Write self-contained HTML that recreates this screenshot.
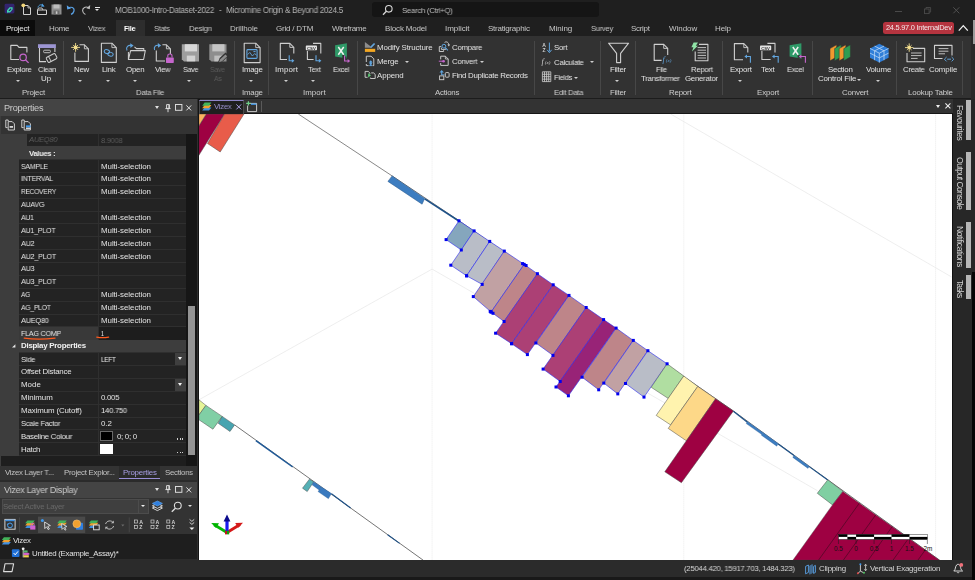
<!DOCTYPE html>
<html><head><meta charset="utf-8"><title>Micromine</title>
<style>
*{box-sizing:border-box;margin:0;padding:0}
html,body{width:975px;height:580px;overflow:hidden}
body{background:#2b2b2b;font-family:"Liberation Sans",sans-serif;font-size:8px;color:#dcdcdc;position:relative}
.a{position:absolute}
.t{position:absolute;white-space:nowrap;line-height:12px;height:12px;will-change:transform}
svg{overflow:visible}
</style></head><body>
<div class="a" style="left:0px;top:0px;width:975px;height:20px;background:#1f1f1f;"></div>
<div class="a" style="left:0px;top:20px;width:975px;height:16px;background:#1f1f1f;"></div>
<svg class="a" style="left:3.6px;top:2.7px" width="12" height="13" viewBox="0 0 12 13"><rect x="0.6" y="0.8" width="9.8" height="9.6" rx="1.4" fill="#33246e"/><path d="M3 7.2 L5.6 4.2 H8.6 V6.6 L6 9.4 H3.6 L3 10.4 Z" fill="#3fd9b0"/><path d="M4.6 7.4 L6.3 5.6 H7.3 V6.4 L5.7 8.1 H4.6Z" fill="#33246e"/></svg>
<svg class="a" style="left:21px;top:2.2px" width="12" height="14" viewBox="0 0 12 14"><path d="M2.5 3.5 H7 L9.5 6 V12.5 H2.5Z" fill="none" stroke="#d0d0d0" stroke-width="1"/><path d="M7 3.5V6H9.5" fill="none" stroke="#d0d0d0" stroke-width="0.8"/><circle cx="2.3" cy="3.3" r="1.9" fill="#f3d77a"/></svg>
<svg class="a" style="left:36px;top:2.2px" width="13" height="14" viewBox="0 0 13 14"><path d="M1.5 8 H10.5 V12.5 H1.5Z" fill="none" stroke="#d0d0d0" stroke-width="1"/><path d="M1.5 8 L2.5 6 H6 L7 8" fill="none" stroke="#d0d0d0" stroke-width="0.9"/><path d="M2 5.5 C2.5 2.5 6 2 7.5 4" fill="none" stroke="#4f9fe0" stroke-width="1"/><path d="M6.2 1.5 L8.6 4.6 L5.2 4.8Z" fill="#4f9fe0"/></svg>
<svg class="a" style="left:51px;top:4px" width="12" height="11" viewBox="0 0 12 11"><rect x="0.5" y="0.5" width="10" height="10" fill="#8f8f8f"/><rect x="2.5" y="0.5" width="6" height="4" fill="#bdbdbd"/><rect x="2.5" y="6.5" width="6" height="4" fill="#6a6a6a"/><rect x="4.8" y="7.3" width="1.6" height="2.6" fill="#c9c9c9"/></svg>
<svg class="a" style="left:66px;top:4px" width="11" height="11" viewBox="0 0 11 11"><path d="M2 4.2 C5 2.2 8.6 3.6 8 7 C7.6 8.6 6.4 9.8 5 10.4" fill="none" stroke="#5aa3e8" stroke-width="1.2"/><path d="M0.8 1.2 L1.2 5.6 L5 4.4Z" fill="#5aa3e8"/></svg>
<svg class="a" style="left:80px;top:4px" width="12" height="11" viewBox="0 0 12 11"><path d="M8.5 3.8 C5.8 2 2.4 3.6 2.6 6.8 C2.8 8.6 4 9.8 5.4 10.4" fill="none" stroke="#bdbdbd" stroke-width="1.1"/><path d="M10.2 1 L9.8 5.2 L6.4 4.2Z" fill="#bdbdbd"/></svg>
<div class="a" style="left:94.5px;top:6.6px;width:5.6px;height:1px;background:#e6e6e6;"></div>
<div class="a" style="left:94.50px;top:8.80px;width:0;height:0;border-left:2.8px solid transparent;border-right:2.8px solid transparent;border-top:2.8px solid #e6e6e6"></div>
<div class="t" style="left:114.70px;top:4.00px;font-size:8.3px;color:#b4b4b4;letter-spacing:-0.300px;transform:scaleX(0.9750);transform-origin:0 50%;">MOB1000-Intro-Dataset-2022</div>
<div class="t" style="left:218.60px;top:4.00px;font-size:8.3px;color:#b4b4b4;letter-spacing:-0.300px;transform:scaleX(0.9739);transform-origin:0 50%;">-</div>
<div class="t" style="left:225.90px;top:4.00px;font-size:8.3px;color:#b4b4b4;letter-spacing:-0.300px;transform:scaleX(0.9823);transform-origin:0 50%;">Micromine Origin &amp; Beyond 2024.5</div>
<div class="a" style="left:372px;top:2px;width:227.2px;height:15.4px;background:#151515;border-radius:3px;"></div>
<svg class="a" style="left:382px;top:4px" width="12" height="12" viewBox="0 0 12 12"><circle cx="6.8" cy="4.8" r="3.3" fill="none" stroke="#d8d8d8" stroke-width="1.1"/><path d="M4.4 7.3 L1 10.8" stroke="#d8d8d8" stroke-width="1.3"/></svg>
<div class="t" style="left:401.90px;top:5.00px;font-size:8.1px;color:#bdbdbd;letter-spacing:-0.300px;transform:scaleX(0.9651);transform-origin:0 50%;">Search (Ctrl+Q)</div>
<div class="a" style="left:895px;top:10.6px;width:6.6px;height:1px;background:#4a4a4a;"></div>
<svg class="a" style="left:924px;top:7px" width="8" height="8" viewBox="0 0 8 8"><rect x="0.5" y="2" width="4.6" height="4.6" fill="none" stroke="#4a4a4a" stroke-width="0.9"/><path d="M2 2V0.5H6.6V5.1H5.1" fill="none" stroke="#4a4a4a" stroke-width="0.9"/></svg>
<svg class="a" style="left:953px;top:6.5px" width="7" height="7" viewBox="0 0 7 7"><path d="M0.3 0.3L6.3 6.3M6.3 0.3L0.3 6.3" stroke="#505050" stroke-width="1"/></svg>
<div class="a" style="left:0px;top:20px;width:35px;height:16px;background:#0b0b0b;"></div>
<div class="a" style="left:115.5px;top:20px;width:29px;height:16px;background:#2d2d2d;"></div>
<div class="t" style="left:6.00px;top:23.00px;font-size:8.0px;color:#e8e8e8;letter-spacing:-0.233px;">Project</div>
<div class="t" style="left:49.00px;top:23.00px;font-size:8.0px;color:#c6c6c6;letter-spacing:-0.280px;">Home</div>
<div class="t" style="left:88.00px;top:23.00px;font-size:8.0px;color:#c6c6c6;letter-spacing:-0.300px;transform:scaleX(0.9605);transform-origin:0 50%;">Vizex</div>
<div class="t" style="left:153.90px;top:23.00px;font-size:8.0px;color:#c6c6c6;letter-spacing:-0.300px;transform:scaleX(0.9395);transform-origin:0 50%;">Stats</div>
<div class="t" style="left:188.50px;top:23.00px;font-size:8.0px;color:#c6c6c6;letter-spacing:-0.300px;transform:scaleX(0.9828);transform-origin:0 50%;">Design</div>
<div class="t" style="left:229.90px;top:23.00px;font-size:8.0px;color:#c6c6c6;letter-spacing:-0.113px;">Drillhole</div>
<div class="t" style="left:276.00px;top:23.00px;font-size:8.0px;color:#c6c6c6;letter-spacing:-0.201px;">Grid / DTM</div>
<div class="t" style="left:332.00px;top:23.00px;font-size:8.0px;color:#c6c6c6;letter-spacing:-0.274px;">Wireframe</div>
<div class="t" style="left:385.30px;top:23.00px;font-size:8.0px;color:#c6c6c6;letter-spacing:-0.168px;">Block Model</div>
<div class="t" style="left:445.30px;top:23.00px;font-size:8.0px;color:#c6c6c6;letter-spacing:-0.042px;">Implicit</div>
<div class="t" style="left:488.00px;top:23.00px;font-size:8.0px;color:#c6c6c6;letter-spacing:-0.251px;">Stratigraphic</div>
<div class="t" style="left:548.80px;top:23.00px;font-size:8.0px;color:#c6c6c6;letter-spacing:-0.073px;">Mining</div>
<div class="t" style="left:590.70px;top:23.00px;font-size:8.0px;color:#c6c6c6;letter-spacing:-0.300px;transform:scaleX(0.9445);transform-origin:0 50%;">Survey</div>
<div class="t" style="left:631.20px;top:23.00px;font-size:8.0px;color:#c6c6c6;letter-spacing:-0.300px;transform:scaleX(0.9974);transform-origin:0 50%;">Script</div>
<div class="t" style="left:668.50px;top:23.00px;font-size:8.0px;color:#c6c6c6;letter-spacing:-0.031px;">Window</div>
<div class="t" style="left:714.70px;top:23.00px;font-size:8.0px;color:#c6c6c6;letter-spacing:-0.151px;">Help</div>
<div class="t" style="left:124.00px;top:23.00px;font-size:8.0px;color:#ffffff;letter-spacing:-0.300px;transform:scaleX(0.8928);transform-origin:0 50%;font-weight:bold;">File</div>
<div class="a" style="left:883px;top:22px;width:70.6px;height:11.8px;background:#b5343f;border-radius:2.5px;"></div>
<div class="t" style="left:885.60px;top:22.00px;font-size:7.4px;color:#f4e9ea;letter-spacing:-0.238px;">24.5.97.0 InternalDev</div>
<svg class="a" style="left:958px;top:24px" width="11" height="8" viewBox="0 0 11 8"><path d="M0.8 6.6 L5.3 1.6 L9.8 6.6" fill="none" stroke="#f0f0f0" stroke-width="1.3"/></svg>
<div class="a" style="left:0px;top:36px;width:975px;height:63px;background:#323232;"></div>
<div class="a" style="left:63.1px;top:41px;width:1px;height:53.5px;background:#474747;"></div>
<div class="a" style="left:233.9px;top:41px;width:1px;height:53.5px;background:#474747;"></div>
<div class="a" style="left:268.1px;top:41px;width:1px;height:53.5px;background:#474747;"></div>
<div class="a" style="left:356.9px;top:41px;width:1px;height:53.5px;background:#474747;"></div>
<div class="a" style="left:533.9px;top:41px;width:1px;height:53.5px;background:#474747;"></div>
<div class="a" style="left:599.9px;top:41px;width:1px;height:53.5px;background:#474747;"></div>
<div class="a" style="left:634.9px;top:41px;width:1px;height:53.5px;background:#474747;"></div>
<div class="a" style="left:722.1px;top:41px;width:1px;height:53.5px;background:#474747;"></div>
<div class="a" style="left:811.5px;top:41px;width:1px;height:53.5px;background:#474747;"></div>
<div class="a" style="left:896.3px;top:41px;width:1px;height:53.5px;background:#474747;"></div>
<div class="a" style="left:962.2px;top:41px;width:1px;height:53.5px;background:#474747;"></div>
<div class="t" style="left:6.60px;top:64.00px;font-size:7.9px;color:#e2e2e2;letter-spacing:-0.300px;transform:scaleX(0.9925);transform-origin:0 50%;">Explore</div>
<div class="t" style="left:37.60px;top:64.00px;font-size:7.9px;color:#e2e2e2;letter-spacing:-0.300px;transform:scaleX(0.9464);transform-origin:0 50%;">Clean</div>
<div class="t" style="left:41.40px;top:73.00px;font-size:7.9px;color:#e2e2e2;letter-spacing:0.101px;">Up</div>
<div class="t" style="left:73.60px;top:64.00px;font-size:7.9px;color:#e2e2e2;letter-spacing:-0.300px;transform:scaleX(0.9997);transform-origin:0 50%;">New</div>
<div class="t" style="left:101.60px;top:64.00px;font-size:7.9px;color:#e2e2e2;letter-spacing:-0.300px;transform:scaleX(0.9858);transform-origin:0 50%;">Link</div>
<div class="t" style="left:126.40px;top:64.00px;font-size:7.9px;color:#e2e2e2;letter-spacing:-0.242px;">Open</div>
<div class="t" style="left:155.40px;top:64.00px;font-size:7.9px;color:#e2e2e2;letter-spacing:-0.300px;transform:scaleX(0.9701);transform-origin:0 50%;">View</div>
<div class="t" style="left:182.60px;top:64.00px;font-size:7.9px;color:#e2e2e2;letter-spacing:-0.300px;transform:scaleX(0.9002);transform-origin:0 50%;">Save</div>
<div class="t" style="left:241.60px;top:64.00px;font-size:7.9px;color:#e2e2e2;letter-spacing:-0.289px;">Image</div>
<div class="t" style="left:275.00px;top:64.00px;font-size:7.9px;color:#e2e2e2;letter-spacing:0.122px;">Import</div>
<div class="t" style="left:307.60px;top:64.00px;font-size:7.9px;color:#e2e2e2;letter-spacing:-0.300px;transform:scaleX(0.9420);transform-origin:0 50%;">Text</div>
<div class="t" style="left:333.00px;top:64.00px;font-size:7.9px;color:#e2e2e2;letter-spacing:-0.300px;transform:scaleX(0.9051);transform-origin:0 50%;">Excel</div>
<div class="t" style="left:610.40px;top:64.00px;font-size:7.9px;color:#e2e2e2;letter-spacing:-0.271px;">Filter</div>
<div class="t" style="left:656.00px;top:64.00px;font-size:7.9px;color:#e2e2e2;letter-spacing:-0.300px;transform:scaleX(0.9298);transform-origin:0 50%;">File</div>
<div class="t" style="left:641.00px;top:73.00px;font-size:7.9px;color:#e2e2e2;letter-spacing:-0.300px;transform:scaleX(0.9817);transform-origin:0 50%;">Transformer</div>
<div class="t" style="left:690.60px;top:64.00px;font-size:7.9px;color:#e2e2e2;letter-spacing:-0.300px;transform:scaleX(0.9814);transform-origin:0 50%;">Report</div>
<div class="t" style="left:685.00px;top:73.00px;font-size:7.9px;color:#e2e2e2;letter-spacing:-0.300px;transform:scaleX(0.9949);transform-origin:0 50%;">Generator</div>
<div class="t" style="left:730.00px;top:64.00px;font-size:7.9px;color:#e2e2e2;letter-spacing:-0.167px;">Export</div>
<div class="t" style="left:761.30px;top:64.00px;font-size:7.9px;color:#e2e2e2;letter-spacing:-0.263px;">Text</div>
<div class="t" style="left:787.20px;top:64.00px;font-size:7.9px;color:#e2e2e2;letter-spacing:-0.300px;transform:scaleX(0.9383);transform-origin:0 50%;">Excel</div>
<div class="t" style="left:827.70px;top:64.00px;font-size:7.9px;color:#e2e2e2;letter-spacing:-0.242px;">Section</div>
<div class="t" style="left:818.00px;top:73.00px;font-size:7.9px;color:#e2e2e2;letter-spacing:-0.172px;">Control File</div>
<div class="t" style="left:866.00px;top:64.00px;font-size:7.9px;color:#e2e2e2;letter-spacing:-0.210px;">Volume</div>
<div class="t" style="left:903.00px;top:64.00px;font-size:7.9px;color:#e2e2e2;letter-spacing:-0.300px;transform:scaleX(0.9814);transform-origin:0 50%;">Create</div>
<div class="t" style="left:929.20px;top:64.00px;font-size:7.9px;color:#e2e2e2;letter-spacing:-0.113px;">Compile</div>
<div class="t" style="left:210.00px;top:64.00px;font-size:7.9px;color:#5a5a5a;letter-spacing:-0.300px;transform:scaleX(0.8768);transform-origin:0 50%;">Save</div>
<div class="t" style="left:214.00px;top:73.00px;font-size:7.9px;color:#5a5a5a;letter-spacing:-0.300px;transform:scaleX(0.8521);transform-origin:0 50%;">As</div>
<div class="a" style="left:16.20px;top:79.95px;width:0;height:0;border-left:2.0px solid transparent;border-right:2.0px solid transparent;border-top:2.1px solid #cfcfcf"></div>
<div class="a" style="left:78.40px;top:79.95px;width:0;height:0;border-left:2.0px solid transparent;border-right:2.0px solid transparent;border-top:2.1px solid #cfcfcf"></div>
<div class="a" style="left:105.60px;top:79.95px;width:0;height:0;border-left:2.0px solid transparent;border-right:2.0px solid transparent;border-top:2.1px solid #cfcfcf"></div>
<div class="a" style="left:132.80px;top:79.95px;width:0;height:0;border-left:2.0px solid transparent;border-right:2.0px solid transparent;border-top:2.1px solid #cfcfcf"></div>
<div class="a" style="left:187.40px;top:79.95px;width:0;height:0;border-left:2.0px solid transparent;border-right:2.0px solid transparent;border-top:2.1px solid #cfcfcf"></div>
<div class="a" style="left:249.00px;top:79.95px;width:0;height:0;border-left:2.0px solid transparent;border-right:2.0px solid transparent;border-top:2.1px solid #cfcfcf"></div>
<div class="a" style="left:283.60px;top:79.95px;width:0;height:0;border-left:2.0px solid transparent;border-right:2.0px solid transparent;border-top:2.1px solid #cfcfcf"></div>
<div class="a" style="left:311.00px;top:79.95px;width:0;height:0;border-left:2.0px solid transparent;border-right:2.0px solid transparent;border-top:2.1px solid #cfcfcf"></div>
<div class="a" style="left:615.40px;top:79.95px;width:0;height:0;border-left:2.0px solid transparent;border-right:2.0px solid transparent;border-top:2.1px solid #cfcfcf"></div>
<div class="a" style="left:737.60px;top:79.95px;width:0;height:0;border-left:2.0px solid transparent;border-right:2.0px solid transparent;border-top:2.1px solid #cfcfcf"></div>
<div class="a" style="left:876.20px;top:79.95px;width:0;height:0;border-left:2.0px solid transparent;border-right:2.0px solid transparent;border-top:2.1px solid #cfcfcf"></div>
<div class="a" style="left:857.00px;top:78.55px;width:0;height:0;border-left:2.0px solid transparent;border-right:2.0px solid transparent;border-top:2.1px solid #cfcfcf"></div>
<div class="t" style="left:21.60px;top:87.00px;font-size:7.9px;color:#cdcdcd;letter-spacing:-0.231px;">Project</div>
<div class="t" style="left:135.60px;top:87.00px;font-size:7.9px;color:#cdcdcd;letter-spacing:-0.300px;transform:scaleX(0.9722);transform-origin:0 50%;">Data File</div>
<div class="t" style="left:242.00px;top:87.00px;font-size:7.9px;color:#cdcdcd;letter-spacing:-0.239px;">Image</div>
<div class="t" style="left:303.00px;top:87.00px;font-size:7.9px;color:#cdcdcd;letter-spacing:0.042px;">Import</div>
<div class="t" style="left:435.00px;top:87.00px;font-size:7.9px;color:#cdcdcd;letter-spacing:-0.251px;">Actions</div>
<div class="t" style="left:553.60px;top:87.00px;font-size:7.9px;color:#cdcdcd;letter-spacing:-0.300px;transform:scaleX(0.9769);transform-origin:0 50%;">Edit Data</div>
<div class="t" style="left:610.40px;top:87.00px;font-size:7.9px;color:#cdcdcd;letter-spacing:-0.271px;">Filter</div>
<div class="t" style="left:669.00px;top:87.00px;font-size:7.9px;color:#cdcdcd;letter-spacing:-0.222px;">Report</div>
<div class="t" style="left:757.40px;top:87.00px;font-size:7.9px;color:#cdcdcd;letter-spacing:-0.127px;">Export</div>
<div class="t" style="left:842.00px;top:87.00px;font-size:7.9px;color:#cdcdcd;letter-spacing:-0.194px;">Convert</div>
<div class="t" style="left:907.80px;top:87.00px;font-size:7.9px;color:#cdcdcd;letter-spacing:-0.178px;">Lookup Table</div>
<div class="t" style="left:377.40px;top:42.00px;font-size:7.9px;color:#e2e2e2;letter-spacing:-0.128px;">Modify Structure</div>
<div class="t" style="left:377.40px;top:56.00px;font-size:7.9px;color:#e2e2e2;letter-spacing:-0.198px;">Merge</div>
<div class="t" style="left:377.40px;top:70.00px;font-size:7.9px;color:#e2e2e2;letter-spacing:-0.128px;">Append</div>
<div class="t" style="left:452.00px;top:42.00px;font-size:7.9px;color:#e2e2e2;letter-spacing:-0.300px;transform:scaleX(0.9905);transform-origin:0 50%;">Compare</div>
<div class="t" style="left:452.00px;top:56.00px;font-size:7.9px;color:#e2e2e2;letter-spacing:-0.300px;transform:scaleX(0.9821);transform-origin:0 50%;">Convert</div>
<div class="t" style="left:452.00px;top:70.00px;font-size:7.9px;color:#e2e2e2;letter-spacing:-0.291px;">Find Duplicate Records</div>
<div class="t" style="left:554.00px;top:42.00px;font-size:7.9px;color:#e2e2e2;letter-spacing:-0.300px;transform:scaleX(0.9861);transform-origin:0 50%;">Sort</div>
<div class="t" style="left:554.00px;top:57.00px;font-size:7.9px;color:#e2e2e2;letter-spacing:-0.300px;transform:scaleX(0.9825);transform-origin:0 50%;">Calculate</div>
<div class="t" style="left:554.00px;top:72.00px;font-size:7.9px;color:#e2e2e2;letter-spacing:-0.300px;transform:scaleX(0.9400);transform-origin:0 50%;">Fields</div>
<div class="a" style="left:405.40px;top:60.75px;width:0;height:0;border-left:2.0px solid transparent;border-right:2.0px solid transparent;border-top:2.1px solid #cfcfcf"></div>
<div class="a" style="left:479.60px;top:61.15px;width:0;height:0;border-left:2.0px solid transparent;border-right:2.0px solid transparent;border-top:2.1px solid #cfcfcf"></div>
<div class="a" style="left:590.40px;top:60.95px;width:0;height:0;border-left:2.0px solid transparent;border-right:2.0px solid transparent;border-top:2.1px solid #cfcfcf"></div>
<div class="a" style="left:574.40px;top:76.55px;width:0;height:0;border-left:2.0px solid transparent;border-right:2.0px solid transparent;border-top:2.1px solid #cfcfcf"></div>
<svg class="a" style="left:0;top:0" width="975" height="100" viewBox="0 0 975 100"><path d="M26.9 52.5V47.4H19L17.2 45.4H10.8V59.5H19" fill="none" stroke="#cfcfcf" stroke-width="1.1" stroke-linejoin="round"/><circle cx="23.1" cy="57.4" r="3.2" fill="none" stroke="#c566cc" stroke-width="1.2"/><path d="M25.4 59.8L28.6 62.9" stroke="#c566cc" stroke-width="1.3"/><rect x="38" y="44.2" width="17.9" height="3.8" fill="#9c95d2"/><path d="M54.9 48V52M39.5 48V61.6H46" fill="none" stroke="#cfcfcf" stroke-width="1.1"/><rect x="43.6" y="50.2" width="6.8" height="2.5" rx="1" fill="none" stroke="#cfcfcf" stroke-width="0.9"/><g transform="translate(51.6 58) rotate(-28)"><rect x="-5" y="-2.8" width="10" height="5.6" rx="1.2" fill="#323232" stroke="#cfcfcf" stroke-width="1"/><path d="M-2 -2.8V2.8" stroke="#cfcfcf" stroke-width="0.9"/></g><path d="M79.5 44.8H84.4L88.4 48.8V61.4H74.9V52.5" fill="none" stroke="#cfcfcf" stroke-width="1.1" stroke-linejoin="round"/><path d="M84.4 44.8V48.8H88.4" fill="none" stroke="#cfcfcf" stroke-width="0.9"/><path d="M71.20 47.40L80.00 47.40M73.11 44.91L78.09 49.89M75.60 43.00L75.60 51.80M78.09 44.91L73.11 49.89" stroke="#f4df8e" stroke-width="0.9"/><circle cx="75.6" cy="47.4" r="1.85" fill="#f4df8e"/><path d="M101.4 43.2H111.89999999999999L116.3 47.6V62.4H101.4Z" fill="none" stroke="#cfcfcf" stroke-width="1.1" stroke-linejoin="round"/><path d="M111.89999999999999 43.2V47.6H116.3" fill="none" stroke="#cfcfcf" stroke-width="0.8800000000000001"/><ellipse cx="106.9" cy="51.6" rx="2.7" ry="1.9" fill="none" stroke="#62a5de" stroke-width="1" transform="rotate(15 106.9 51.6)"/><ellipse cx="110.5" cy="54.2" rx="2.7" ry="1.9" fill="none" stroke="#62a5de" stroke-width="1" transform="rotate(15 110.5 54.2)"/><path d="M134.5 46.8L136.4 48.6H143.8V50.4M128.4 52V59.5H143.6L145.3 50.6H130.6L128.4 59.5" fill="none" stroke="#cfcfcf" stroke-width="1.05" stroke-linejoin="round"/><path d="M127 50.4C125.4 47 128.4 44.6 131.4 45.6" fill="none" stroke="#62a5de" stroke-width="1.1"/><path d="M130.2 43.2L133.6 45.6L130.4 48Z" fill="#62a5de"/><path d="M162.4 44.8H166.4L170.4 48.8V54M156.3 50.6V61H165" fill="none" stroke="#cfcfcf" stroke-width="1.1" stroke-linejoin="round"/><path d="M166.4 44.8V48.8H170.4" fill="none" stroke="#cfcfcf" stroke-width="0.9"/><path d="M154.6 50C153.4 46.8 156 44.6 158.8 45.4" fill="none" stroke="#62a5de" stroke-width="1.1"/><path d="M157.8 43L161.2 45.4L158 47.8Z" fill="#62a5de"/><rect x="166" y="57.4" width="7.8" height="5.5" rx="0.6" fill="#c566cc"/><path d="M167.8 57.4V55.8C167.8 53.4 172 53.4 172 55.8V57.4" fill="none" stroke="#c566cc" stroke-width="1.1"/><path d="M181.8 44.2H199.0V61.4H184.0L181.8 59.2Z" fill="#9e9e9e"/><rect x="184.8" y="44.2" width="12.2" height="7.2" fill="#d8d8d8"/><rect x="186.8" y="55.6" width="8.4" height="5.8" fill="#d2d2d2"/><path d="M209.3 44.2H226.5V61.4H211.5L209.3 59.2Z" fill="#8e8e8e"/><rect x="212.3" y="44.2" width="12.2" height="7.2" fill="#c4c4c4"/><rect x="214.3" y="55.6" width="8.4" height="5.8" fill="#bebebe"/><path d="M217.6 63.4L219.6 58L225.6 52.6L228.6 55.6L222.8 61.4Z" fill="#323232"/><path d="M219 62.2L220.2 59.2L225.4 54.4L227.2 56.2L222 61.2Z" fill="#8c8c8c"/><path d="M244.2 43.2H255.70000000000002L260.1 47.6V62.6H244.2Z" fill="none" stroke="#cfcfcf" stroke-width="1.1" stroke-linejoin="round"/><path d="M255.70000000000002 43.2V47.6H260.1" fill="none" stroke="#cfcfcf" stroke-width="0.8800000000000001"/><rect x="246.9" y="49.6" width="10.2" height="8.8" rx="0.8" fill="none" stroke="#62a5de" stroke-width="1.1"/><path d="M247.6 54.6L249.8 52.4L252.4 56L254.6 53.6L256.6 55.2" fill="none" stroke="#62a5de" stroke-width="0.9"/><path d="M253.4 51.6H255.6" stroke="#62a5de" stroke-width="1"/><path d="M293.8 53.4V47.4L289.8 43.4H280.3V59.5H287" fill="none" stroke="#cfcfcf" stroke-width="1.1" stroke-linejoin="round"/><path d="M289.8 43.4V47.4H293.8" fill="none" stroke="#cfcfcf" stroke-width="0.9"/><path d="M289.2 55.2V60.8H292.9" fill="none" stroke="#62a5de" stroke-width="1.1"/><path d="M291.79999999999995 58.8L294.4 60.8L291.79999999999995 62.8Z" fill="#62a5de"/><path d="M313 43.4H320.8V53.4M307.4 51V59.5H313.6" fill="none" stroke="#cfcfcf" stroke-width="1.1" stroke-linejoin="round"/><rect x="305.8" y="45.6" width="11.2" height="4.6" rx="0.8" fill="#e4e4e4"/><text x="311.40000000000003" y="49.5" font-size="4.2" font-weight="bold" text-anchor="middle" fill="#323232" font-family="Liberation Sans">CSV</text><path d="M316 55.2V60.8H319.9" fill="none" stroke="#62a5de" stroke-width="1.1"/><path d="M318.79999999999995 58.8L321.4 60.8L318.79999999999995 62.8Z" fill="#62a5de"/><path d="M335.1 45.2L346.90000000000003 43.2V58.4L335.1 56.6Z" fill="#2f9a68"/><path d="M338.3 47L343.70000000000005 54.8M343.70000000000005 47L338.3 54.8" stroke="#f2f2f2" stroke-width="1.5"/><path d="M343.4 55V61.8H345.4V56.4" fill="none" stroke="#323232" stroke-width="2.2"/><path d="M344.6 55.4V61H348.7" fill="none" stroke="#c566cc" stroke-width="1.1"/><path d="M347.59999999999997 59L350.2 61L347.59999999999997 63Z" fill="#c566cc"/><path d="M364.9 42.1V47.8H372.4Z" fill="#8d8d8d"/><rect x="364.9" y="48.8" width="10.3" height="3.1" fill="#f3a722"/><path d="M370.2 47.9L370.9 45.9L374 42.9L375.2 44.1L372.1 47.2Z" fill="#62a5de"/><path d="M366.3 62V56.2H371L373.8 58.8V65.6H372.6M366.3 64V65.6H368.6" fill="none" stroke="#cfcfcf" stroke-width="0.95"/><path d="M370.7 65.8V61.6" stroke="#62a5de" stroke-width="1.2"/><path d="M368.7 62.6L370.7 60.2L372.7 62.6Z" fill="#62a5de"/><circle cx="370.7" cy="63.4" r="1.2" fill="#62a5de"/><path d="M369.2 65.6H372.2" stroke="#62a5de" stroke-width="0.9"/><path d="M367.6 77.3H365.1V71.4H368.2L369.9 73V73.8" fill="none" stroke="#cfcfcf" stroke-width="0.95"/><path d="M371.2 72.9H373.6L375.2 74.4V78.5H370.4V77.6" fill="none" stroke="#cfcfcf" stroke-width="0.95"/><path d="M368.2 73.2L371 75.3L368.2 77.4Z" fill="#5fd07a"/><path d="M441.2 46.6H439.3V51.5H443.6V50.2" fill="none" stroke="#cfcfcf" stroke-width="0.95"/><path d="M445.8 48.4V49.4H441.4V47.6" fill="none" stroke="#cfcfcf" stroke-width="0.9"/><path d="M444.6 42.4C446.6 41 449 42.6 448.8 45.2" fill="none" stroke="#cfcfcf" stroke-width="0.95"/><path d="M447.4 44.6L448.9 46.4L450 44.4Z" fill="#cfcfcf"/><circle cx="443.9" cy="46.2" r="1.9" fill="none" stroke="#62a5de" stroke-width="1"/><path d="M445.3 47.7L447.9 50.4" stroke="#62a5de" stroke-width="1.05"/><path d="M440.7 59.4V56.2H445.4L448.2 59V65.4H440.7V63" fill="none" stroke="#cfcfcf" stroke-width="0.95"/><path d="M445.4 56.2V59H448.2" fill="none" stroke="#cfcfcf" stroke-width="0.8"/><path d="M438.8 61.2H443" stroke="#c566cc" stroke-width="1"/><circle cx="443.6" cy="61.2" r="1.3" fill="#c566cc"/><path d="M441.7 75.2V71.4" stroke="#62a5de" stroke-width="1.1"/><path d="M439.5 72.4L441.7 69.9L443.9 72.4Z" fill="#62a5de"/><path d="M441.7 74.8H444.6" stroke="#62a5de" stroke-width="0.9"/><rect x="439.6" y="75.9" width="4.2" height="3.8" fill="none" stroke="#cfcfcf" stroke-width="0.9"/><rect x="445.3" y="72.6" width="3.8" height="4.6" rx="0.9" fill="none" stroke="#cfcfcf" stroke-width="0.95"/><text x="544" y="46.8" font-size="5" font-weight="bold" text-anchor="middle" fill="#cfcfcf" font-family="Liberation Sans">A</text><text x="544" y="52.4" font-size="5" font-weight="bold" text-anchor="middle" fill="#cfcfcf" font-family="Liberation Sans">Z</text><path d="M549.4 42.6V51.4" stroke="#62a5de" stroke-width="1"/><path d="M547.2 49.8L549.4 52.6L551.6 49.8" fill="none" stroke="#62a5de" stroke-width="1"/><text x="541.6" y="64.4" font-size="8.2" font-style="italic" fill="#cfcfcf" font-family="Liberation Serif">f</text><text x="544.8" y="64.2" font-size="5" font-style="italic" fill="#cfcfcf" font-family="Liberation Serif">(x)</text><path d="M542.4 71.8V81.6M544.5 71.8V81.6M546.6 71.8V81.6M548.7 71.8V81.6M550.8 71.8V81.6M542.4 71.80H550.8M542.4 74.25H550.8M542.4 76.70H550.8M542.4 79.15H550.8M542.4 81.60H550.8" stroke="#cfcfcf" stroke-width="0.8" fill="none"/><path d="M608.6 43.2H628.6L620.6 53.4V62.6H616.6V53.4Z" fill="none" stroke="#cfcfcf" stroke-width="1.1" stroke-linejoin="round"/><path d="M667.7 55V48.4L663.7 44.4H654.2V60.4H661.6" fill="none" stroke="#cfcfcf" stroke-width="1.1" stroke-linejoin="round"/><path d="M663.7 44.4V48.4H667.7" fill="none" stroke="#cfcfcf" stroke-width="0.9"/><text x="662.6" y="62.2" font-size="8.2" font-style="italic" fill="#62a5de" font-family="Liberation Serif">f</text><text x="665.8" y="62" font-size="5" font-style="italic" fill="#62a5de" font-family="Liberation Serif">(x)</text><path d="M699 44.4H707.9V60.8H695.2V51.5" fill="none" stroke="#cfcfcf" stroke-width="1.1" stroke-linejoin="round"/><path d="M697.6 47.6H706M697.6 50.2H706M697.6 52.8H706M697.6 55.4H706M697.6 58H706" stroke="#cfcfcf" stroke-width="0.9"/><path d="M693.6 42.6H698L695.8 45.8H697.8L692 51.4L693.4 47.2H691.4Z" fill="#8fe3a6"/><path d="M747.8 52.4V47.6L743.8 43.6H734.4V59.7H743" fill="none" stroke="#cfcfcf" stroke-width="1.1" stroke-linejoin="round"/><path d="M743.8 43.6V47.6H747.8" fill="none" stroke="#cfcfcf" stroke-width="0.9"/><path d="M745.9 56.5H750.4V62.8" fill="none" stroke="#62a5de" stroke-width="1.1"/><path d="M747.0 54.5L744.4 56.5L747.0 58.5Z" fill="#62a5de"/><path d="M767.4 43.4H775V52.4M761.9 51V59.5H770.6" fill="none" stroke="#cfcfcf" stroke-width="1.1" stroke-linejoin="round"/><rect x="760" y="45.6" width="11.2" height="4.6" rx="0.8" fill="#e4e4e4"/><text x="765.6" y="49.5" font-size="4.2" font-weight="bold" text-anchor="middle" fill="#323232" font-family="Liberation Sans">CSV</text><path d="M773.5 56.5H778.2V62.8" fill="none" stroke="#62a5de" stroke-width="1.1"/><path d="M774.6 54.5L772 56.5L774.6 58.5Z" fill="#62a5de"/><path d="M789.6 45.2L801.4 43.2V58.4L789.6 56.6Z" fill="#2f9a68"/><path d="M792.8000000000001 47L798.2 54.8M798.2 47L792.8000000000001 54.8" stroke="#f2f2f2" stroke-width="1.5"/><path d="M797.6 56.5H805.6V62" fill="none" stroke="#323232" stroke-width="2.6"/><path d="M800.3 56.5H805.4V62.8" fill="none" stroke="#c566cc" stroke-width="1.1"/><path d="M801.4 54.5L798.8 56.5L801.4 58.5Z" fill="#c566cc"/><path d="M830.0 48.6L836.6 44.8V57L830.0 60.8Z" fill="#f2992e" stroke="#323232" stroke-width="0.5"/><path d="M834.6 48.6L841.2 44.8V57L834.6 60.8Z" fill="#2f9d52" stroke="#323232" stroke-width="0.5"/><path d="M839.2 48.6L845.8 44.8V57L839.2 60.8Z" fill="#f2992e" stroke="#323232" stroke-width="0.5"/><path d="M843.8 48.6L850.4 44.8V57L843.8 60.8Z" fill="#2f9d52" stroke="#323232" stroke-width="0.5"/><path d="M879.3 43.8L888.6 48.4V57.8L879.3 62.6L870 57.8V48.4Z" fill="#2f7ed8"/><path d="M870 48.4L879.3 53.2L888.6 48.4M879.3 53.2V62.6M874.6 46.1L884 50.8V60.2M884 46.1L874.6 50.8V60.2M870 53.1L879.3 57.9L888.6 53.1" fill="none" stroke="#cfe3f8" stroke-width="0.7"/><path d="M913 48.4H924.7V61.8H907V53" fill="none" stroke="#cfcfcf" stroke-width="1.1" stroke-linejoin="round"/><path d="M911 53H921.6M911 55.6H921.6M911 58.4H917.6" stroke="#cfcfcf" stroke-width="0.9"/><path d="M905.00 47.60L913.40 47.60M906.82 45.22L911.58 49.98M909.20 43.40L909.20 51.80M911.58 45.22L906.82 49.98" stroke="#f4df8e" stroke-width="0.9"/><circle cx="909.2" cy="47.6" r="1.76" fill="#f4df8e"/><path d="M942.5 58.5H934.5V45.4H952V55.4" fill="none" stroke="#cfcfcf" stroke-width="1.1" stroke-linejoin="round"/><path d="M938.6 48.6H948.4M938.6 51.2H948.4M938.6 53.8H945" stroke="#cfcfcf" stroke-width="0.9"/><path d="M946.6 57L944.4 59.2L946.6 61.4M951.6 57L953.8 59.2L951.6 61.4M947.2 59.2H951" fill="none" stroke="#62a5de" stroke-width="0.95"/></svg>
<div class="a" style="left:0px;top:98.4px;width:975px;height:1px;background:#1c1c1c;"></div>
<div class="a" style="left:0px;top:99px;width:197px;height:381px;background:#3d3d3d;"></div>
<div class="a" style="left:197px;top:99px;width:2.6px;height:461px;background:#141414;"></div>
<div class="a" style="left:197.2px;top:99px;width:1px;height:461px;background:#2e2e2e;"></div>
<div class="a" style="left:0px;top:99px;width:197px;height:17px;background:#444444;"></div>
<div class="t" style="left:4.20px;top:102.00px;font-size:9.2px;color:#c9c9c9;letter-spacing:-0.259px;">Properties</div>
<div class="a" style="left:155.30px;top:106.40px;width:0;height:0;border-left:2.7px solid transparent;border-right:2.7px solid transparent;border-top:3.0px solid #e0e0e0"></div>
<svg class="a" style="left:164px;top:103.6px" width="8" height="9" viewBox="0 0 8 9"><path d="M2.6 0.6H5.4V4.4H2.6ZM1.4 4.6H6.6M4 4.6V8.2" fill="none" stroke="#e0e0e0" stroke-width="0.95"/><path d="M4.9 0.6V4.4" stroke="#e0e0e0" stroke-width="0.9"/></svg>
<svg class="a" style="left:174.6px;top:104.39999999999999px" width="8" height="7" viewBox="0 0 8 7"><rect x="0.5" y="0.5" width="6.4" height="5.8" fill="none" stroke="#e0e0e0" stroke-width="0.95"/></svg>
<svg class="a" style="left:185.6px;top:104.8px" width="6" height="6" viewBox="0 0 6 6"><path d="M0.4 0.4L5.2 5.4M5.2 0.4L0.4 5.4" stroke="#e0e0e0" stroke-width="1"/></svg>
<div class="a" style="left:1px;top:116px;width:196px;height:17.6px;background:#333333;"></div>
<svg class="a" style="left:5px;top:119px" width="11" height="12" viewBox="0 0 11 12"><path d="M3.2 2.2V1H0.8V8.6H2.6" fill="none" stroke="#d6d6d6" stroke-width="0.95"/><path d="M3.2 2.6H7.2L9.4 4.8V11H3.2Z" fill="none" stroke="#d6d6d6" stroke-width="0.95"/><rect x="4.6" y="7" width="3.4" height="1.8" fill="#d6d6d6"/></svg>
<svg class="a" style="left:21px;top:119px" width="11" height="12" viewBox="0 0 11 12"><path d="M3.2 2.2V1H0.8V8.6H2.6" fill="none" stroke="#d6d6d6" stroke-width="0.95"/><path d="M3.2 2.6H7.2L9.4 4.8V11H3.2Z" fill="none" stroke="#d6d6d6" stroke-width="0.95"/><rect x="5" y="6.4" width="4.6" height="2" fill="#3f9bf0"/><rect x="5" y="8.6" width="4.6" height="1.6" fill="#d6d6d6"/></svg>
<div class="a" style="left:27.4px;top:133.6px;width:158.6px;height:12.8px;background:#232323;"></div>
<div class="a" style="left:98px;top:133.6px;width:1px;height:12.8px;background:#2f2f2f;"></div>
<div class="t" style="left:29.40px;top:134.00px;font-size:7.9px;color:#5c5c5c;letter-spacing:-0.300px;transform:scaleX(0.9637);transform-origin:0 50%;font-style:italic;">AUEQ80</div>
<div class="t" style="left:101.00px;top:135.00px;font-size:7.9px;color:#5a5a5a;letter-spacing:-0.300px;transform:scaleX(0.9619);transform-origin:0 50%;">8.9008</div>
<div class="t" style="left:29.30px;top:148.00px;font-size:7.9px;color:#f0f0f0;letter-spacing:-0.300px;transform:scaleX(0.9618);transform-origin:0 50%;font-weight:bold;">Values :</div>
<div class="a" style="left:18.5px;top:159.6px;width:167.5px;height:180.17999999999998px;background:#232323;"></div>
<div class="a" style="left:18.5px;top:352.65px;width:167.5px;height:102.96px;background:#232323;"></div>
<div class="a" style="left:18.5px;top:326.90999999999997px;width:79.5px;height:12.87px;background:#393939;"></div>
<div class="a" style="left:98.5px;top:326.90999999999997px;width:87.5px;height:12.87px;background:#1d1d1d;"></div>
<div class="a" style="left:18.5px;top:159.1px;width:167.5px;height:1px;background:#2f2f2f;"></div>
<div class="a" style="left:18.5px;top:171.97px;width:167.5px;height:1px;background:#2f2f2f;"></div>
<div class="a" style="left:18.5px;top:184.84px;width:167.5px;height:1px;background:#2f2f2f;"></div>
<div class="a" style="left:18.5px;top:197.70999999999998px;width:167.5px;height:1px;background:#2f2f2f;"></div>
<div class="a" style="left:18.5px;top:210.57999999999998px;width:167.5px;height:1px;background:#2f2f2f;"></div>
<div class="a" style="left:18.5px;top:223.45px;width:167.5px;height:1px;background:#2f2f2f;"></div>
<div class="a" style="left:18.5px;top:236.32px;width:167.5px;height:1px;background:#2f2f2f;"></div>
<div class="a" style="left:18.5px;top:249.19px;width:167.5px;height:1px;background:#2f2f2f;"></div>
<div class="a" style="left:18.5px;top:262.06px;width:167.5px;height:1px;background:#2f2f2f;"></div>
<div class="a" style="left:18.5px;top:274.93px;width:167.5px;height:1px;background:#2f2f2f;"></div>
<div class="a" style="left:18.5px;top:287.79999999999995px;width:167.5px;height:1px;background:#2f2f2f;"></div>
<div class="a" style="left:18.5px;top:300.66999999999996px;width:167.5px;height:1px;background:#2f2f2f;"></div>
<div class="a" style="left:18.5px;top:313.53999999999996px;width:167.5px;height:1px;background:#2f2f2f;"></div>
<div class="a" style="left:18.5px;top:326.40999999999997px;width:167.5px;height:1px;background:#2f2f2f;"></div>
<div class="a" style="left:18.5px;top:352.15px;width:167.5px;height:1px;background:#2f2f2f;"></div>
<div class="a" style="left:18.5px;top:365.02px;width:167.5px;height:1px;background:#2f2f2f;"></div>
<div class="a" style="left:18.5px;top:377.89px;width:167.5px;height:1px;background:#2f2f2f;"></div>
<div class="a" style="left:18.5px;top:390.76px;width:167.5px;height:1px;background:#2f2f2f;"></div>
<div class="a" style="left:18.5px;top:403.63px;width:167.5px;height:1px;background:#2f2f2f;"></div>
<div class="a" style="left:18.5px;top:416.5px;width:167.5px;height:1px;background:#2f2f2f;"></div>
<div class="a" style="left:18.5px;top:429.37px;width:167.5px;height:1px;background:#2f2f2f;"></div>
<div class="a" style="left:18.5px;top:442.24px;width:167.5px;height:1px;background:#2f2f2f;"></div>
<div class="a" style="left:18.5px;top:455.11px;width:167.5px;height:1px;background:#2f2f2f;"></div>
<div class="a" style="left:98px;top:159.6px;width:1px;height:180.17999999999998px;background:#2f2f2f;"></div>
<div class="a" style="left:98px;top:352.65px;width:1px;height:102.96px;background:#2f2f2f;"></div>
<div class="t" style="left:20.50px;top:161.00px;font-size:7.9px;color:#e4e4e4;letter-spacing:-0.300px;transform:scaleX(0.8870);transform-origin:0 50%;">SAMPLE</div>
<div class="t" style="left:101.00px;top:161.00px;font-size:7.9px;color:#e4e4e4;letter-spacing:-0.035px;">Multi-selection</div>
<div class="t" style="left:20.50px;top:173.00px;font-size:7.9px;color:#e4e4e4;letter-spacing:-0.300px;transform:scaleX(0.8993);transform-origin:0 50%;">INTERVAL</div>
<div class="t" style="left:101.00px;top:173.00px;font-size:7.9px;color:#e4e4e4;letter-spacing:-0.035px;">Multi-selection</div>
<div class="t" style="left:20.50px;top:186.00px;font-size:7.9px;color:#e4e4e4;letter-spacing:-0.300px;transform:scaleX(0.8386);transform-origin:0 50%;">RECOVERY</div>
<div class="t" style="left:101.00px;top:186.00px;font-size:7.9px;color:#e4e4e4;letter-spacing:-0.035px;">Multi-selection</div>
<div class="t" style="left:20.50px;top:199.00px;font-size:7.9px;color:#e4e4e4;letter-spacing:-0.300px;transform:scaleX(0.9083);transform-origin:0 50%;">AUAVG</div>
<div class="t" style="left:20.50px;top:212.00px;font-size:7.9px;color:#e4e4e4;letter-spacing:-0.300px;transform:scaleX(0.8870);transform-origin:0 50%;">AU1</div>
<div class="t" style="left:101.00px;top:212.00px;font-size:7.9px;color:#e4e4e4;letter-spacing:-0.035px;">Multi-selection</div>
<div class="t" style="left:20.50px;top:225.00px;font-size:7.9px;color:#e4e4e4;letter-spacing:-0.300px;transform:scaleX(0.9061);transform-origin:0 50%;">AU1_PLOT</div>
<div class="t" style="left:101.00px;top:225.00px;font-size:7.9px;color:#e4e4e4;letter-spacing:-0.035px;">Multi-selection</div>
<div class="t" style="left:20.50px;top:238.00px;font-size:7.9px;color:#e4e4e4;letter-spacing:-0.300px;transform:scaleX(0.9276);transform-origin:0 50%;">AU2</div>
<div class="t" style="left:101.00px;top:238.00px;font-size:7.9px;color:#e4e4e4;letter-spacing:-0.035px;">Multi-selection</div>
<div class="t" style="left:20.50px;top:251.00px;font-size:7.9px;color:#e4e4e4;letter-spacing:-0.300px;transform:scaleX(0.9218);transform-origin:0 50%;">AU2_PLOT</div>
<div class="t" style="left:101.00px;top:251.00px;font-size:7.9px;color:#e4e4e4;letter-spacing:-0.035px;">Multi-selection</div>
<div class="t" style="left:20.50px;top:263.00px;font-size:7.9px;color:#e4e4e4;letter-spacing:-0.300px;transform:scaleX(0.9276);transform-origin:0 50%;">AU3</div>
<div class="t" style="left:20.50px;top:276.00px;font-size:7.9px;color:#e4e4e4;letter-spacing:-0.300px;transform:scaleX(0.9218);transform-origin:0 50%;">AU3_PLOT</div>
<div class="t" style="left:20.50px;top:289.00px;font-size:7.9px;color:#e4e4e4;letter-spacing:-0.300px;transform:scaleX(0.8368);transform-origin:0 50%;">AG</div>
<div class="t" style="left:101.00px;top:289.00px;font-size:7.9px;color:#e4e4e4;letter-spacing:-0.035px;">Multi-selection</div>
<div class="t" style="left:20.50px;top:302.00px;font-size:7.9px;color:#e4e4e4;letter-spacing:-0.300px;transform:scaleX(0.8631);transform-origin:0 50%;">AG_PLOT</div>
<div class="t" style="left:101.00px;top:302.00px;font-size:7.9px;color:#e4e4e4;letter-spacing:-0.035px;">Multi-selection</div>
<div class="t" style="left:20.50px;top:315.00px;font-size:7.9px;color:#e4e4e4;letter-spacing:-0.300px;transform:scaleX(0.9401);transform-origin:0 50%;">AUEQ80</div>
<div class="t" style="left:101.00px;top:315.00px;font-size:7.9px;color:#e4e4e4;letter-spacing:-0.035px;">Multi-selection</div>
<div class="t" style="left:20.50px;top:328.00px;font-size:7.9px;color:#e4e4e4;letter-spacing:-0.300px;transform:scaleX(0.9178);transform-origin:0 50%;">FLAG COMP</div>
<div class="t" style="left:101.00px;top:328.00px;font-size:7.9px;color:#e4e4e4;letter-spacing:-0.300px;transform:scaleX(0.6351);transform-origin:0 50%;">1</div>
<div class="t" style="left:20.50px;top:340.00px;font-size:7.9px;color:#f2f2f2;letter-spacing:-0.251px;font-weight:bold;">Display Properties</div>
<svg class="a" style="left:12px;top:344.045px" width="4" height="4" viewBox="0 0 4 4"><path d="M3.4 0.2V3.6H0Z" fill="#e6e6e6"/></svg>
<div class="t" style="left:20.50px;top:354.00px;font-size:7.9px;color:#e4e4e4;letter-spacing:-0.300px;transform:scaleX(0.9656);transform-origin:0 50%;">Side</div>
<div class="t" style="left:101.00px;top:354.00px;font-size:7.9px;color:#e4e4e4;letter-spacing:-0.300px;transform:scaleX(0.8146);transform-origin:0 50%;">LEFT</div>
<div class="t" style="left:20.50px;top:366.00px;font-size:7.9px;color:#e4e4e4;letter-spacing:-0.226px;">Offset Distance</div>
<div class="t" style="left:20.50px;top:379.00px;font-size:7.9px;color:#e4e4e4;letter-spacing:0.046px;">Mode</div>
<div class="t" style="left:20.50px;top:392.00px;font-size:7.9px;color:#e4e4e4;letter-spacing:-0.040px;">Minimum</div>
<div class="t" style="left:101.00px;top:392.00px;font-size:7.9px;color:#e4e4e4;letter-spacing:-0.300px;transform:scaleX(0.9909);transform-origin:0 50%;">0.005</div>
<div class="t" style="left:20.50px;top:405.00px;font-size:7.9px;color:#e4e4e4;letter-spacing:-0.115px;">Maximum (Cutoff)</div>
<div class="t" style="left:101.00px;top:405.00px;font-size:7.9px;color:#e4e4e4;letter-spacing:-0.300px;transform:scaleX(0.9792);transform-origin:0 50%;">140.750</div>
<div class="t" style="left:20.50px;top:418.00px;font-size:7.9px;color:#e4e4e4;letter-spacing:-0.300px;transform:scaleX(0.9623);transform-origin:0 50%;">Scale Factor</div>
<div class="t" style="left:101.00px;top:418.00px;font-size:7.9px;color:#e4e4e4;letter-spacing:-0.091px;">0.2</div>
<div class="t" style="left:20.50px;top:431.00px;font-size:7.9px;color:#e4e4e4;letter-spacing:-0.300px;transform:scaleX(0.9947);transform-origin:0 50%;">Baseline Colour</div>
<div class="t" style="left:20.50px;top:444.00px;font-size:7.9px;color:#e4e4e4;letter-spacing:-0.284px;">Hatch</div>
<div class="a" style="left:174.9px;top:353.04999999999995px;width:11.1px;height:11.969999999999999px;background:#3f3f3f;"></div>
<div class="a" style="left:177.90px;top:357.35px;width:0;height:0;border-left:2.8px solid transparent;border-right:2.8px solid transparent;border-top:3.0px solid #f4f4f4"></div>
<div class="a" style="left:174.9px;top:378.78999999999996px;width:11.1px;height:11.969999999999999px;background:#3f3f3f;"></div>
<div class="a" style="left:177.90px;top:383.09px;width:0;height:0;border-left:2.8px solid transparent;border-right:2.8px solid transparent;border-top:3.0px solid #f4f4f4"></div>
<div class="a" style="left:99.9px;top:430.87px;width:12.9px;height:10.6px;background:#000000;border:0.8px solid #6a6a6a;"></div>
<div class="t" style="left:116.90px;top:431.00px;font-size:7.9px;color:#e4e4e4;letter-spacing:-0.300px;transform:scaleX(0.9970);transform-origin:0 50%;">0; 0; 0</div>
<div class="a" style="left:99.9px;top:443.94px;width:12.9px;height:10.2px;background:#ffffff;"></div>
<div class="a" style="left:177.2px;top:438.47px;width:1.1px;height:1.1px;background:#d0d0d0;"></div>
<div class="a" style="left:179.8px;top:438.47px;width:1.1px;height:1.1px;background:#d0d0d0;"></div>
<div class="a" style="left:182.4px;top:438.47px;width:1.1px;height:1.1px;background:#d0d0d0;"></div>
<div class="a" style="left:177.2px;top:451.54px;width:1.1px;height:1.1px;background:#d0d0d0;"></div>
<div class="a" style="left:179.8px;top:451.54px;width:1.1px;height:1.1px;background:#d0d0d0;"></div>
<div class="a" style="left:182.4px;top:451.54px;width:1.1px;height:1.1px;background:#d0d0d0;"></div>
<svg class="a" style="left:0;top:330px" width="120" height="14" viewBox="0 330 120 14"><path d="M24.2 338.2C32 339.3 46 339.3 55 338.2" fill="none" stroke="#ff5a1e" stroke-width="1.3" stroke-linecap="round"/><path d="M96.8 337.2C100 337.8 105 337.8 108.6 337.2" fill="none" stroke="#ff5a1e" stroke-width="1.3" stroke-linecap="round"/></svg>
<div class="a" style="left:1px;top:455.6px;width:185px;height:10px;background:#1e1e1e;"></div>
<div class="a" style="left:186.2px;top:133.6px;width:11px;height:332px;background:#161616;"></div>
<div class="a" style="left:187.8px;top:305.6px;width:7.3px;height:149.6px;background:#949494;"></div>
<div class="a" style="left:0px;top:465.6px;width:197px;height:14px;background:#333333;"></div>
<div class="a" style="left:119px;top:465.6px;width:41.4px;height:14px;background:#2a2a2a;"></div>
<div class="a" style="left:119px;top:478.2px;width:41.4px;height:1.2px;background:#9a8fd8;"></div>
<div class="t" style="left:4.50px;top:467.00px;font-size:7.9px;color:#c4c4c4;letter-spacing:-0.300px;transform:scaleX(0.9915);transform-origin:0 50%;">Vizex Layer T...</div>
<div class="t" style="left:64.00px;top:467.00px;font-size:7.9px;color:#c4c4c4;letter-spacing:-0.270px;">Project Explor...</div>
<div class="t" style="left:123.00px;top:467.00px;font-size:7.9px;color:#a79de2;letter-spacing:-0.223px;">Properties</div>
<div class="t" style="left:165.00px;top:467.00px;font-size:7.9px;color:#c4c4c4;letter-spacing:-0.300px;transform:scaleX(0.9929);transform-origin:0 50%;">Sections</div>
<div class="a" style="left:0px;top:479.6px;width:197px;height:2px;background:#2b2b2b;"></div>
<div class="a" style="left:0px;top:481.6px;width:197px;height:16px;background:#444444;"></div>
<div class="t" style="left:4.20px;top:484.00px;font-size:9.2px;color:#c9c9c9;letter-spacing:-0.300px;transform:scaleX(0.9811);transform-origin:0 50%;">Vizex Layer Display</div>
<div class="a" style="left:155.30px;top:488.20px;width:0;height:0;border-left:2.7px solid transparent;border-right:2.7px solid transparent;border-top:3.0px solid #e0e0e0"></div>
<svg class="a" style="left:164px;top:485.40000000000003px" width="8" height="9" viewBox="0 0 8 9"><path d="M2.6 0.6H5.4V4.4H2.6ZM1.4 4.6H6.6M4 4.6V8.2" fill="none" stroke="#e0e0e0" stroke-width="0.95"/><path d="M4.9 0.6V4.4" stroke="#e0e0e0" stroke-width="0.9"/></svg>
<svg class="a" style="left:174.6px;top:486.20000000000005px" width="8" height="7" viewBox="0 0 8 7"><rect x="0.5" y="0.5" width="6.4" height="5.8" fill="none" stroke="#e0e0e0" stroke-width="0.95"/></svg>
<svg class="a" style="left:185.6px;top:486.6px" width="6" height="6" viewBox="0 0 6 6"><path d="M0.4 0.4L5.2 5.4M5.2 0.4L0.4 5.4" stroke="#e0e0e0" stroke-width="1"/></svg>
<div class="a" style="left:0px;top:497.6px;width:197px;height:36.2px;background:#333333;"></div>
<div class="a" style="left:2px;top:499px;width:146.8px;height:14.8px;background:#3f3f3f;border:0.8px solid #4c4c4c;"></div>
<div class="a" style="left:138.4px;top:499.6px;width:0.8px;height:13.6px;background:#4c4c4c;"></div>
<div class="t" style="left:3.20px;top:501.00px;font-size:7.9px;color:#686868;letter-spacing:-0.299px;">Select Active Layer</div>
<div class="a" style="left:140.70px;top:505.25px;width:0;height:0;border-left:2.7px solid transparent;border-right:2.7px solid transparent;border-top:2.7px solid #f0f0f0"></div>
<svg class="a" style="left:151.5px;top:500px" width="11" height="13" viewBox="0 0 11 13"><path d="M5.4 5.6L10.4 8L5.4 10.6L0.4 8Z" fill="none" stroke="#e6e6e6" stroke-width="0.9"/><path d="M5.4 3.4L10.4 5.8L5.4 8.4L0.4 5.8Z" fill="#333" stroke="#e6e6e6" stroke-width="0.9"/><path d="M5.4 1L10.4 3.4L5.4 6L0.4 3.4Z" fill="#2f7fe0" stroke="#5aa0ea" stroke-width="0.7"/></svg>
<svg class="a" style="left:171px;top:501px" width="12" height="12" viewBox="0 0 12 12"><circle cx="6.8" cy="4.6" r="3.4" fill="none" stroke="#e0e0e0" stroke-width="1.1"/><path d="M4.4 7.2L0.8 10.8" stroke="#e0e0e0" stroke-width="1.3"/></svg>
<div class="a" style="left:188.40px;top:505.30px;width:0;height:0;border-left:2px solid transparent;border-right:2px solid transparent;border-top:2.2px solid #e0e0e0"></div>
<div class="a" style="left:0px;top:533.8px;width:197px;height:25.4px;background:#1e1e1e;"></div>
<svg class="a" style="left:0;top:514px" width="197" height="46" viewBox="0 514 197 46"><rect x="38" y="516.6" width="47.2" height="16.4" fill="#4a4a4a"/><rect x="4.9" y="519.4" width="10.2" height="9.8" fill="none" stroke="#dcdcdc" stroke-width="0.95"/><rect x="5.2" y="519.7" width="9.6" height="1.5" fill="#3f8fe0"/><circle cx="10" cy="525.4" r="2.4" fill="none" stroke="#4aa0f0" stroke-width="1"/><path d="M7.4 523.2L8.4 524.8L6.8 524.8Z" fill="#4aa0f0"/><rect x="19.2" y="517.4" width="0.8" height="15" fill="#4a4a4a"/><g transform="translate(25 519.6) scale(1.0)"><path d="M2.4 5.6H9.8L7.6 8.4H0.2Z" fill="#3f8fe0"/><path d="M2.4 3.2H9.8L7.6 6H0.2Z" fill="#f0a030"/><path d="M2.4 0.8H9.8L7.6 3.6H0.2Z" fill="#43b35a"/></g><rect x="30.2" y="525.6" width="5.2" height="4" fill="#cf62d0"/><path d="M31.4 525.6V524.4C31.4 522.8 34.2 522.8 34.2 524.4V525.6" fill="none" stroke="#cf62d0" stroke-width="0.9"/><circle cx="42.4" cy="520.6" r="1.5" fill="#3f9bf0"/><path d="M44.6 522L50.4 525.6L47.8 526.2L49.4 529L48.2 529.6L46.6 526.8L44.8 528.6Z" fill="none" stroke="#e6e6e6" stroke-width="0.85"/><g transform="translate(57 519.6) scale(1.0)"><path d="M2.4 5.6H9.8L7.6 8.4H0.2Z" fill="#3f8fe0"/><path d="M2.4 3.2H9.8L7.6 6H0.2Z" fill="#f0a030"/><path d="M2.4 0.8H9.8L7.6 3.6H0.2Z" fill="#43b35a"/></g><path d="M61.6 523.6L66.8 526.6L64.6 527.2L66 529.6L65 530.2L63.6 527.8L62 529.4Z" fill="#4a4a4a" stroke="#e6e6e6" stroke-width="0.8"/><rect x="76" y="522.8" width="7" height="7" rx="0.8" fill="#2f7fe0"/><circle cx="76.8" cy="523.8" r="3.9" fill="#f0a030" stroke="#f7c173" stroke-width="0.6"/><g transform="translate(88.6 519.6) scale(1.0)"><path d="M2.4 5.6H9.8L7.6 8.4H0.2Z" fill="#3f8fe0"/><path d="M2.4 3.2H9.8L7.6 6H0.2Z" fill="#f0a030"/><path d="M2.4 0.8H9.8L7.6 3.6H0.2Z" fill="#43b35a"/></g><rect x="93.6" y="525" width="5.6" height="4.8" fill="#333" stroke="#e6e6e6" stroke-width="0.9"/><path d="M105.6 524C106.4 520.6 111.4 519.8 113.2 522.6M113.6 526C112.8 529.4 107.8 530.2 106 527.4" fill="none" stroke="#bdbdbd" stroke-width="1"/><path d="M113.8 520.4V523.2H111Z" fill="#bdbdbd"/><path d="M105.4 529.6V526.8H108.2Z" fill="#bdbdbd"/><path d="M121.2 524.4H124.4L122.8 526.4Z" fill="#6a6a6a"/><rect x="128.8" y="517.4" width="0.8" height="15" fill="#4a4a4a"/><rect x="134.6" y="520" width="3" height="3" fill="none" stroke="#cfcfcf" stroke-width="0.7"/><rect x="134.6" y="525.4" width="3" height="3" fill="none" stroke="#cfcfcf" stroke-width="0.7"/><text x="139.2" y="523.6" font-size="5.2" font-weight="bold" fill="#cfcfcf" font-family="Liberation Sans">A</text><text x="139.2" y="529.2" font-size="5.2" font-weight="bold" fill="#cfcfcf" font-family="Liberation Sans">Z</text><rect x="151" y="520" width="3" height="3" fill="none" stroke="#cfcfcf" stroke-width="0.7"/><rect x="151" y="525.4" width="3" height="3" fill="none" stroke="#cfcfcf" stroke-width="0.7"/><text x="155.6" y="523.6" font-size="5.2" font-weight="bold" fill="#cfcfcf" font-family="Liberation Sans">A</text><text x="155.6" y="529.2" font-size="5.2" font-weight="bold" fill="#cfcfcf" font-family="Liberation Sans">Z</text><rect x="166.8" y="520" width="3" height="3" fill="none" stroke="#cfcfcf" stroke-width="0.7"/><rect x="166.8" y="525.4" width="3" height="3" fill="none" stroke="#cfcfcf" stroke-width="0.7"/><text x="171.4" y="523.6" font-size="5.2" font-weight="bold" fill="#cfcfcf" font-family="Liberation Sans">A</text><text x="171.4" y="529.2" font-size="5.2" font-weight="bold" fill="#cfcfcf" font-family="Liberation Sans">Z</text><path d="M189.6 519.4L191.9 521.4L194.2 519.4M189.6 522.4L191.9 524.4L194.2 522.4" fill="none" stroke="#e0e0e0" stroke-width="0.9"/><path d="M189.4 527.4H194.4L191.9 530Z" fill="#f0f0f0"/><g transform="translate(1.6 536.6) scale(0.95)"><path d="M2.4 5.6H9.8L7.6 8.4H0.2Z" fill="#3f8fe0"/><path d="M2.4 3.2H9.8L7.6 6H0.2Z" fill="#f0a030"/><path d="M2.4 0.8H9.8L7.6 3.6H0.2Z" fill="#43b35a"/></g><rect x="11.9" y="549.2" width="7.6" height="7.8" rx="1" fill="#1f6fd6"/><path d="M13.6 553L15.2 554.8L18 551.4" fill="none" stroke="#fff" stroke-width="1"/><circle cx="23.2" cy="548.8" r="1.4" fill="#f4f4f4"/><path d="M23.2 549V557.4" stroke="#e8e8e8" stroke-width="0.9"/><rect x="23.6" y="550.4" width="4" height="2.2" fill="#55b86a"/><path d="M23.6 552.8H28.4L29.8 553.9L28.4 555H23.6Z" fill="#d060c8"/><rect x="23.6" y="555.2" width="5.2" height="2.2" fill="#f0d050"/></svg>
<div class="t" style="left:13.30px;top:535.00px;font-size:7.9px;color:#e0e0e0;letter-spacing:-0.300px;transform:scaleX(0.9958);transform-origin:0 50%;">Vizex</div>
<div class="t" style="left:32.20px;top:548.00px;font-size:7.9px;color:#e0e0e0;letter-spacing:-0.298px;">Untitled (Example_Assay)*</div>
<div class="a" style="left:199.5px;top:99.3px;width:753.1px;height:13.7px;background:#333333;"></div>
<div class="a" style="left:199px;top:113px;width:753.6px;height:0.8px;background:#161616;"></div>
<div class="a" style="left:951.9px;top:113px;width:0.8px;height:447px;background:#101010;"></div>
<div class="a" style="left:199.3px;top:99.6px;width:44.4px;height:14px;background:#1f1f1f;border:0.8px solid #4a4a4a;border-top:1.4px solid #8d84c8;border-bottom:none;"></div>
<svg class="a" style="left:202.4px;top:102px" width="10" height="10" viewBox="0 0 10 10"><path d="M2.6 5.4H9.4L7 8.6H0.2Z" fill="#3f8fe0"/><path d="M2.6 3H9.4L7 6.2H0.2Z" fill="#f0a030"/><path d="M2.6 0.6H9.4L7 3.8H0.2Z" fill="#43b35a"/></svg>
<div class="t" style="left:214.00px;top:101.00px;font-size:7.9px;color:#9a92cf;letter-spacing:-0.300px;transform:scaleX(0.9791);transform-origin:0 50%;">Vizex</div>
<svg class="a" style="left:235.6px;top:104px" width="6" height="6" viewBox="0 0 6 6"><path d="M0.4 0.4L5.2 5.4M5.2 0.4L0.4 5.4" stroke="#a79de2" stroke-width="1"/></svg>
<svg class="a" style="left:246px;top:101px" width="12" height="12" viewBox="0 0 12 12"><path d="M3.4 2.4H10.6V10.6H1.6V4.6" fill="none" stroke="#d0d0d0" stroke-width="0.95"/><path d="M5 3.2H10.4" stroke="#3f9bf0" stroke-width="1.3"/><path d="M2.4 0.2V4.6M0.2 2.4H4.6" stroke="#6fd08a" stroke-width="1.2"/></svg>
<div class="a" style="left:260.8px;top:101.4px;width:0.9px;height:10.6px;background:#5a5a5a;"></div>
<div class="a" style="left:936.30px;top:104.70px;width:0;height:0;border-left:2.5px solid transparent;border-right:2.5px solid transparent;border-top:3.0px solid #f0f0f0"></div>
<svg class="a" style="left:945px;top:103.2px" width="6" height="6" viewBox="0 0 6 6"><path d="M0.4 0.4L5.4 5.4M5.4 0.4L0.4 5.4" stroke="#f0f0f0" stroke-width="1.05"/></svg>
<svg class="a" style="left:199.4px;top:113.6px;background:#fff;overflow:hidden" width="752.6" height="446.2" viewBox="199.4 113.6 752.6 446.2"><path d="M432.5 113V560M684.2 113V560M936 113V560" stroke="#e2e2e2" stroke-width="0.7" stroke-dasharray="1 1" fill="none"/><path d="M432.5 268.7L199 399.6M432.5 268.7L818 490.4M671 113.6L952 276.6" stroke="#e6e6e6" stroke-width="0.7" fill="none"/><polygon points="206.6,113.6 225.0,113.6 199.2,155.0 199.2,125.5" fill="#9e0142" stroke="#4a4a4a" stroke-width="0.5" stroke-linejoin="round"/><polygon points="199.2,113.6 206.6,113.6 199.2,125.5" fill="#fbb15f" stroke="#4a4a4a" stroke-width="0.5" stroke-linejoin="round"/><polygon points="225.0,113.6 244.4,113.6 220.6,151.6 207.9,143.1" fill="#e85c4a" stroke="#4a4a4a" stroke-width="0.5" stroke-linejoin="round"/><path d="M298.7 113.6L392.5 175.5" stroke="#555" stroke-width="0.7" fill="none"/><path d="M392.5 175.5L459.2 220.2L733.8 410.6L828.2 479.4L940 559.8" stroke="#3a3a3a" stroke-width="0.7" fill="none"/><polygon points="392.5,175.5 425.1,198.0 422.5,203.8 388.3,181.0" fill="#3d7dc0" stroke="#2a5a8c" stroke-width="0.5" stroke-linejoin="round"/><path d="M425.1 198.4L459.2 220.6" stroke="#1f5288" stroke-width="1.6" fill="none"/><polygon points="459.4,220.4 474.5,230.5 461.7,249.6 446.5,239.2" fill="#85a6bd" stroke="#2a2af0" stroke-width="0.6" stroke-linejoin="round"/><polygon points="474.5,230.5 490.1,241.0 467.0,275.4 451.2,264.8" fill="#b9bdc7" stroke="#2a2af0" stroke-width="0.6" stroke-linejoin="round"/><polygon points="490.1,241.0 504.7,250.7 482.6,284.0 467.0,275.4" fill="#b9bdc7" stroke="#2a2af0" stroke-width="0.6" stroke-linejoin="round"/><polygon points="504.7,250.7 524.6,264.0 491.5,311.6 473.7,296.2" fill="#c1a1a3" stroke="#2a2af0" stroke-width="0.6" stroke-linejoin="round"/><polygon points="524.6,264.0 537.8,273.3 504.5,321.1 491.5,311.6" fill="#be8589" stroke="#2a2af0" stroke-width="0.6" stroke-linejoin="round"/><polygon points="537.8,273.3 553.6,284.4 512.0,343.3 496.0,332.8" fill="#ac4075" stroke="#2a2af0" stroke-width="0.6" stroke-linejoin="round"/><polygon points="553.6,284.4 569.4,295.0 527.8,354.2 512.0,343.3" fill="#ac4075" stroke="#2a2af0" stroke-width="0.6" stroke-linejoin="round"/><polygon points="569.4,295.0 586.6,307.1 553.4,355.0 536.3,342.6" fill="#be8589" stroke="#2a2af0" stroke-width="0.6" stroke-linejoin="round"/><polygon points="586.6,307.1 604.0,319.2 560.6,381.1 543.5,368.7" fill="#ac4075" stroke="#2a2af0" stroke-width="0.6" stroke-linejoin="round"/><polygon points="604.0,319.2 616.5,327.7 568.8,395.4 556.4,386.6" fill="#982377" stroke="#2a2af0" stroke-width="0.6" stroke-linejoin="round"/><polygon points="616.5,327.7 633.7,340.0 599.1,389.4 582.5,376.8" fill="#be8589" stroke="#2a2af0" stroke-width="0.6" stroke-linejoin="round"/><polygon points="633.7,340.0 648.3,350.3 618.2,393.5 604.2,382.7" fill="#c1a1a3" stroke="#2a2af0" stroke-width="0.6" stroke-linejoin="round"/><polygon points="648.3,350.3 667.5,363.4 644.4,396.7 625.9,383.1" fill="#b9bdc7" stroke="#2a2af0" stroke-width="0.6" stroke-linejoin="round"/><polygon points="667.5,363.4 684.2,375.6 668.7,398.1 651.6,386.9" fill="#b0dea1" stroke="#4a4a4a" stroke-width="0.5" stroke-linejoin="round"/><polygon points="684.2,375.6 698.2,386.0 671.0,424.5 656.6,415.0" fill="#fff3ae" stroke="#4a4a4a" stroke-width="0.5" stroke-linejoin="round"/><polygon points="698.2,386.0 716.0,398.4 686.8,440.4 668.6,428.0" fill="#fdd888" stroke="#4a4a4a" stroke-width="0.5" stroke-linejoin="round"/><polygon points="716.0,398.4 733.8,410.6 681.8,482.3 665.2,471.4" fill="#9e0142" stroke="#4a4a4a" stroke-width="0.5" stroke-linejoin="round"/><path d="M733.8 410.8L747.8 421.9" stroke="#1f5288" stroke-width="1.3" fill="none"/><polygon points="747.8,421.2 763.3,432.2 762.2,434.2 746.6,423.2" fill="#3d7dc0" stroke="#2a5a8c" stroke-width="0.3" stroke-linejoin="round"/><polygon points="763.3,432.2 778.6,443.2 777.2,445.8 761.8,434.8" fill="#3d7dc0" stroke="#2a5a8c" stroke-width="0.3" stroke-linejoin="round"/><path d="M778.6 443.6L794.4 455.2" stroke="#1f5288" stroke-width="1.2" fill="none"/><polygon points="794.4,454.8 809.6,465.8 808.4,468.0 793.2,457.0" fill="#3d7dc0" stroke="#2a5a8c" stroke-width="0.3" stroke-linejoin="round"/><path d="M809.6 466.2L828.2 479.6" stroke="#1f5288" stroke-width="1.1" fill="none"/><polygon points="828.2,479.4 843.3,491.0 832.9,504.5 817.7,492.9" fill="#80cfa2" stroke="#4a4a4a" stroke-width="0.5" stroke-linejoin="round"/><polygon points="843.3,491.0 940.0,559.8 793.3,559.8 832.9,504.5" fill="#9e0142" stroke="#4a4a4a" stroke-width="0.4" stroke-linejoin="round"/><path d="M859.8 502.7L818.9 559.8M876.2 514.4L843.7 559.8M892.7 526.1L868.6 559.8M909.1 537.8L893.4 559.8M925.6 549.6L918.3 559.8" stroke="#3a0a1c" stroke-width="0.6" fill="none"/><rect x="445.0" y="237.7" width="3" height="3" fill="#0000f0"/><rect x="460.2" y="248.1" width="3" height="3" fill="#0000f0"/><rect x="449.7" y="263.3" width="3" height="3" fill="#0000f0"/><rect x="465.5" y="273.9" width="3" height="3" fill="#0000f0"/><rect x="465.5" y="273.9" width="3" height="3" fill="#0000f0"/><rect x="481.1" y="282.5" width="3" height="3" fill="#0000f0"/><rect x="472.2" y="294.7" width="3" height="3" fill="#0000f0"/><rect x="490.0" y="310.1" width="3" height="3" fill="#0000f0"/><rect x="490.0" y="310.1" width="3" height="3" fill="#0000f0"/><rect x="503.0" y="319.6" width="3" height="3" fill="#0000f0"/><rect x="494.5" y="331.3" width="3" height="3" fill="#0000f0"/><rect x="510.5" y="341.8" width="3" height="3" fill="#0000f0"/><rect x="510.5" y="341.8" width="3" height="3" fill="#0000f0"/><rect x="526.3" y="352.7" width="3" height="3" fill="#0000f0"/><rect x="534.8" y="341.1" width="3" height="3" fill="#0000f0"/><rect x="551.9" y="353.5" width="3" height="3" fill="#0000f0"/><rect x="542.0" y="367.2" width="3" height="3" fill="#0000f0"/><rect x="559.1" y="379.6" width="3" height="3" fill="#0000f0"/><rect x="554.9" y="385.1" width="3" height="3" fill="#0000f0"/><rect x="567.3" y="393.9" width="3" height="3" fill="#0000f0"/><rect x="581.0" y="375.3" width="3" height="3" fill="#0000f0"/><rect x="597.6" y="387.9" width="3" height="3" fill="#0000f0"/><rect x="602.7" y="381.2" width="3" height="3" fill="#0000f0"/><rect x="616.7" y="392.0" width="3" height="3" fill="#0000f0"/><rect x="624.4" y="381.6" width="3" height="3" fill="#0000f0"/><rect x="642.9" y="395.2" width="3" height="3" fill="#0000f0"/><rect x="457.9" y="218.9" width="3" height="3" fill="#0000f0"/><rect x="473.0" y="229.0" width="3" height="3" fill="#0000f0"/><rect x="488.6" y="239.5" width="3" height="3" fill="#0000f0"/><rect x="503.2" y="249.2" width="3" height="3" fill="#0000f0"/><rect x="523.1" y="262.5" width="3" height="3" fill="#0000f0"/><rect x="536.3" y="271.8" width="3" height="3" fill="#0000f0"/><rect x="552.1" y="282.9" width="3" height="3" fill="#0000f0"/><rect x="567.9" y="293.5" width="3" height="3" fill="#0000f0"/><rect x="585.1" y="305.6" width="3" height="3" fill="#0000f0"/><rect x="602.5" y="317.7" width="3" height="3" fill="#0000f0"/><rect x="615.0" y="326.2" width="3" height="3" fill="#0000f0"/><rect x="632.2" y="338.5" width="3" height="3" fill="#0000f0"/><rect x="646.8" y="348.8" width="3" height="3" fill="#0000f0"/><rect x="666.0" y="361.9" width="3" height="3" fill="#0000f0"/><rect x="521.5" y="261.7" width="3" height="3" fill="#0000f0"/><rect x="525.0" y="263.6" width="3" height="3" fill="#0000f0"/><rect x="489.1" y="309.5" width="3" height="3" fill="#0000f0"/><rect x="491.9" y="311.4" width="3" height="3" fill="#0000f0"/><polygon points="199.2,399.3 206.3,405.0 199.2,414.8" fill="#e6f598" stroke="#4a4a4a" stroke-width="0.5" stroke-linejoin="round"/><polygon points="206.3,405.0 222.6,416.0 213.3,428.8 199.2,419.3 199.2,414.8" fill="#80cfa5" stroke="#4a4a4a" stroke-width="0.5" stroke-linejoin="round"/><polygon points="222.6,416.0 235.0,424.5 230.4,431.1 218.6,422.9" fill="#47a4b0" stroke="#4a4a4a" stroke-width="0.5" stroke-linejoin="round"/><path d="M235 424.5L312.2 479.7L423.6 559.8" stroke="#3a3a3a" stroke-width="0.7" fill="none"/><path d="M256.3 440.3L293.1 466.6" stroke="#1f5a99" stroke-width="1.5" fill="none"/><path d="M331.9 493.4L351 507.6M388 534.4L400 543" stroke="#1f5288" stroke-width="1.1" fill="none"/><polygon points="309.8,478.8 314.1,481.4 307.6,491.2 302.9,487.8" fill="#55b0b5" stroke="#4a4a4a" stroke-width="0.5" stroke-linejoin="round"/><polygon points="314.1,481.4 321.9,486.6 319.8,489.8 312.4,484.4" fill="#3a7abf" stroke="#2a5a8c" stroke-width="0.3" stroke-linejoin="round"/><polygon points="321.9,486.6 331.9,493.1 328.8,498.3 318.4,491.2" fill="#3a7abf" stroke="#2a5a8c" stroke-width="0.3" stroke-linejoin="round"/><path d="M227.4 532L214.6 524.4" stroke="#08b808" stroke-width="2.9"/><path d="M211.6 522.6L219.4 522.8L216.4 527.6Z" fill="#00b400"/><path d="M227.4 532L240.4 524.2" stroke="#d41818" stroke-width="2.9"/><path d="M243.4 522.4L235.6 522.6L238.6 527.4Z" fill="#d41a1a"/><path d="M227.4 532.4V520" stroke="#1a1af0" stroke-width="3.2"/><path d="M227.4 514L230.8 521.2H224Z" fill="#0a0a8c"/><rect x="225.4" y="530.4" width="2" height="3.6" fill="#c01818"/><rect x="227.4" y="530.4" width="2.2" height="3.6" fill="#10a010"/><rect x="838.9" y="533.9" width="88.9" height="5.2" fill="#fff" stroke="#000" stroke-width="0.4"/><rect x="838.9" y="533.9" width="8.9" height="2.6" fill="#000"/><rect x="847.8" y="536.5" width="8.7" height="2.6" fill="#000"/><rect x="856.5" y="533.9" width="18.0" height="2.6" fill="#000"/><rect x="874.5" y="536.5" width="17.4" height="2.6" fill="#000"/><rect x="891.9" y="533.9" width="18.0" height="2.6" fill="#000"/><rect x="909.9" y="536.5" width="17.9" height="2.6" fill="#000"/><path d="M838.9 539.1V543.6M856.5 539.1V543.6M874.5 539.1V543.6M891.9 539.1V543.6M909.9 539.1V543.6M927.8 539.1V543.6" stroke="#1a1a1a" stroke-width="0.5"/><text x="838.9" y="550.6" font-size="6.4" text-anchor="middle" fill="#111" font-family="Liberation Sans">0.5</text><text x="856.5" y="550.6" font-size="6.4" text-anchor="middle" fill="#111" font-family="Liberation Sans">0</text><text x="874.5" y="550.6" font-size="6.4" text-anchor="middle" fill="#111" font-family="Liberation Sans">0.5</text><text x="891.9" y="550.6" font-size="6.4" text-anchor="middle" fill="#111" font-family="Liberation Sans">1</text><text x="909.9" y="550.6" font-size="6.4" text-anchor="middle" fill="#111" font-family="Liberation Sans">1.5</text><text x="928.4" y="550.6" font-size="6.4" text-anchor="middle" fill="#111" font-family="Liberation Sans">2m</text></svg>
<div class="a" style="left:952.6px;top:99px;width:22.4px;height:461px;background:#272727;"></div>
<div class="a" style="left:971.2px;top:36px;width:3.8px;height:63px;background:#2a2a2a;"></div>
<div class="a" style="left:972px;top:272px;width:3px;height:288px;background:#050505;"></div>
<div class="a" style="left:972.9px;top:19.8px;width:2.1px;height:24.6px;background:#9c9c9c;"></div>
<div class="a" style="left:965.7px;top:100.2px;width:5.2px;height:40.3px;background:#b6b6b6;"></div>
<div class="a" style="left:964.9px;top:104.8px;width:0;height:0;transform:rotate(90deg);transform-origin:0 0;"><div style="position:absolute;left:0;top:0;white-space:nowrap;line-height:11px;height:11px;font-size:8.6px;letter-spacing:-0.483px;color:#d2d2d2">Favourites</div></div>
<div class="a" style="left:965.7px;top:151.9px;width:5.2px;height:57.900000000000006px;background:#b6b6b6;"></div>
<div class="a" style="left:964.9px;top:156.5px;width:0;height:0;transform:rotate(90deg);transform-origin:0 0;"><div style="position:absolute;left:0;top:0;white-space:nowrap;line-height:11px;height:11px;font-size:8.6px;letter-spacing:-0.535px;color:#d2d2d2">Output Console</div></div>
<div class="a" style="left:965.7px;top:221.5px;width:5.2px;height:46.60000000000002px;background:#b6b6b6;"></div>
<div class="a" style="left:964.9px;top:226.2px;width:0;height:0;transform:rotate(90deg);transform-origin:0 0;"><div style="position:absolute;left:0;top:0;white-space:nowrap;line-height:11px;height:11px;font-size:8.6px;letter-spacing:-0.462px;color:#d2d2d2">Notifications</div></div>
<div class="a" style="left:965.7px;top:274.7px;width:5.2px;height:24.400000000000034px;background:#b6b6b6;"></div>
<div class="a" style="left:964.9px;top:280.0px;width:0;height:0;transform:rotate(90deg);transform-origin:0 0;"><div style="position:absolute;left:0;top:0;white-space:nowrap;line-height:11px;height:11px;font-size:8.6px;letter-spacing:-0.946px;color:#d2d2d2">Tasks</div></div>
<div class="a" style="left:0px;top:559.8px;width:975px;height:17px;background:#2b2b2b;"></div>
<div class="a" style="left:0px;top:576.6px;width:975px;height:3.4px;background:#191919;"></div>
<div class="a" style="left:972px;top:559.8px;width:3px;height:20.2px;background:#050505;"></div>
<svg class="a" style="left:3px;top:563.4px" width="12" height="10" viewBox="0 0 12 10"><path d="M2 0.8H10.6L9 8.6H0.6Z" fill="none" stroke="#dcdcdc" stroke-width="1.1" stroke-linejoin="round"/></svg>
<div class="t" style="left:684.00px;top:563.00px;font-size:7.9px;color:#d6d6d6;letter-spacing:-0.300px;transform:scaleX(0.9886);transform-origin:0 50%;">(25044.420, 15917.703, 1484.323)</div>
<svg class="a" style="left:805px;top:564px" width="11" height="11" viewBox="0 0 11 11"><path d="M0.6 2.4L3.4 1V8.4L0.6 9.8Z" fill="none" stroke="#5aa3e8" stroke-width="0.9"/><path d="M4.6 2L7.4 0.6V8.8L4.6 10.2Z" fill="#5aa3e8" opacity="0.55" stroke="#5aa3e8" stroke-width="0.9"/><path d="M8.6 2.4L10.4 1.4V8.4L8.6 9.4Z" fill="none" stroke="#5aa3e8" stroke-width="0.9"/></svg>
<div class="t" style="left:818.60px;top:563.00px;font-size:7.9px;color:#d6d6d6;letter-spacing:-0.192px;">Clipping</div>
<svg class="a" style="left:857.4px;top:563.4px" width="11" height="12" viewBox="0 0 11 12"><path d="M3.4 1V8.2L0.8 10.4M3.4 8.2L7 9.8" fill="none" stroke="#d8d8d8" stroke-width="0.9"/><circle cx="3.4" cy="1.2" r="1" fill="#3f9bf0"/><circle cx="0.9" cy="10.3" r="1" fill="#e04848"/><circle cx="7" cy="9.8" r="1" fill="#50c060"/><path d="M8.6 1.6V7.4M7.4 2.8L8.6 1.2L9.8 2.8M7.4 6.2L8.6 7.8L9.8 6.2" fill="none" stroke="#d8d8d8" stroke-width="0.8"/></svg>
<div class="t" style="left:870.20px;top:563.00px;font-size:7.9px;color:#d6d6d6;letter-spacing:-0.213px;">Vertical Exaggeration</div>
<svg class="a" style="left:952.6px;top:563.4px" width="11" height="12" viewBox="0 0 11 12"><path d="M0.8 8C2.8 6.8 2 3.4 3.8 1.8C5 0.8 6.6 1.4 7.2 2.8C8 4.8 7.4 6.8 9.6 8Z" fill="none" stroke="#e0e0e0" stroke-width="0.95" stroke-linejoin="round"/><path d="M4 9.2C4.4 10 5.8 10 6.2 9.2" fill="none" stroke="#e0e0e0" stroke-width="0.9"/><circle cx="8.3" cy="1.9" r="1.9" fill="#f0707a"/></svg>
</body></html>
